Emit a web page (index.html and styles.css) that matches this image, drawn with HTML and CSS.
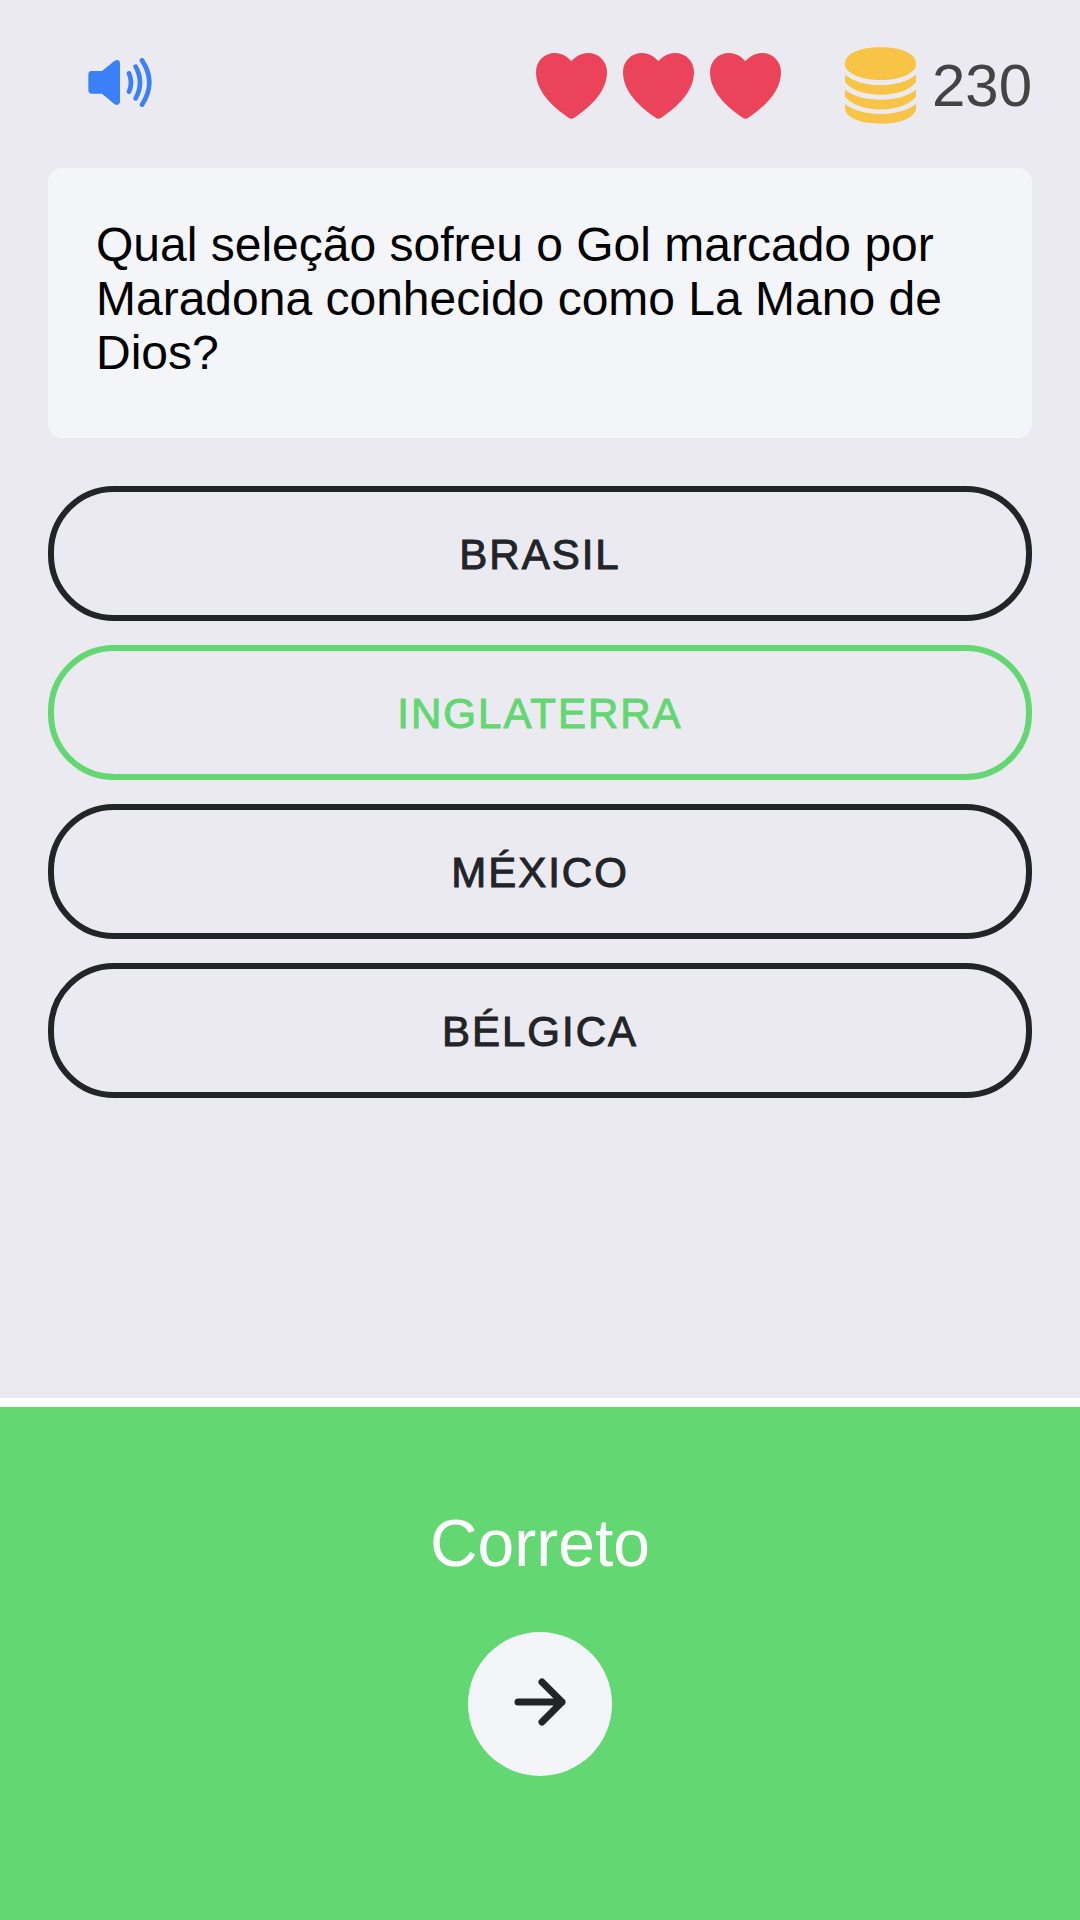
FILE: index.html
```html
<!DOCTYPE html>
<html lang="pt-BR">
<head>
  <meta charset="utf-8">
  <meta name="viewport" content="width=device-width, initial-scale=1">
  <title>Quiz</title>
  <link rel="stylesheet" href="styles.css">
</head>
<body class="quiz">
  <svg class="symbols" aria-hidden="true">
    <symbol id="heart" viewBox="0 0 213 198">
      <path d="M106 25C96 12 78 0 57 0C25 0 0 24 0 57C0 115 48 160 98 194Q106 200 115 194C165 160 213 115 213 57C213 24 188 0 156 0C135 0 117 12 106 25Z"/>
    </symbol>
  </svg>

  <header class="status">
    <button class="sound" type="button" aria-label="Som">
      <svg class="sound-icon" viewBox="0 0 192 147" aria-hidden="true">
        <path class="sound-body" d="M10 39H42L80 8Q84 6 88 6Q96 7 96 16V132Q95 140 87 141Q83 141 79 138L42 107H10Q1 106 1 97V49Q1 40 10 39Z"/>
        <path class="sound-wave" d="M123 46Q135 73 123 101M143 26Q169 73 143 121M162 7Q206 73 162 140"/>
      </svg>
    </button>
    <div class="lives" role="img" aria-label="3 vidas">
      <svg class="heart"><use href="#heart"/></svg>
      <svg class="heart"><use href="#heart"/></svg>
      <svg class="heart"><use href="#heart"/></svg>
    </div>
    <div class="coins">
      <svg class="coins-icon" viewBox="0 0 213 231" aria-hidden="true">
        <path d="M0 48C2 18 48 1 107 1S211 18 213 48V56C208 80 162 99 107 99S5 80 0 56Z"/>
        <path d="M0 83C25 103 62 114 107 114S188 103 213 83V105C193 130 155 143 107 143S20 130 0 105Z"/>
        <path d="M0 128C25 147 62 158 107 158S188 147 213 128V149C193 173 155 187 107 187S20 173 0 149Z"/>
        <path d="M0 171C25 190 62 201 107 201S188 190 213 171V186C208 214 165 230 107 230S5 214 0 186Z"/>
      </svg>
      <span class="coins-value">230</span>
    </div>
  </header>

  <main class="content">
    <h1 class="question">Qual seleção sofreu o Gol marcado por Maradona conhecido como La Mano de Dios?</h1>
    <div class="answers">
      <button class="answer" type="button">BRASIL</button>
      <button class="answer answer-correct" type="button">INGLATERRA</button>
      <button class="answer" type="button">MÉXICO</button>
      <button class="answer" type="button">BÉLGICA</button>
    </div>
  </main>

  <footer class="result">
    <p class="result-text">Correto</p>
    <button class="next" type="button" aria-label="Próxima pergunta">
      <svg class="next-icon" viewBox="0 0 54 54" aria-hidden="true">
        <path d="M5 25H49M29 5L49 25L29 45"/>
      </svg>
    </button>
  </footer>
</body>
</html>
```

FILE: styles.css
```css
:root {
  --background: #ebeaf0;
  --surface: #f4f5f9;
  --dark: #222428;
  --success: #63d772;
  --danger: #eb445a;
  --primary: #3b80f7;
  --gold: #f7c445;
}

* {
  box-sizing: border-box;
}

.quiz {
  display: flex;
  flex-direction: column;
  min-height: 100vh;
  margin: 0;
  background: var(--background);
  color: #000;
  font-family: "Helvetica Neue", "Liberation Sans", Arial, sans-serif;
}

button {
  margin: 0;
  padding: 0;
  border: 0;
  background: none;
  font: inherit;
  cursor: pointer;
}

svg {
  display: block;
}

.symbols {
  position: absolute;
  width: 0;
  height: 0;
}

.status {
  display: flex;
  align-items: center;
  height: 168px;
  padding: 3px 48px 0 88px;
}

.sound {
  margin-right: auto;
  padding-bottom: 6px;
}

.sound-icon {
  width: 64px;
  height: 49px;
}

.sound-body {
  fill: var(--primary);
}

.sound-wave {
  fill: none;
  stroke: var(--primary);
  stroke-width: 14;
  stroke-linecap: round;
}

.lives {
  display: flex;
  gap: 16px;
  margin-right: 64px;
}

.heart {
  width: 71px;
  height: 66px;
  fill: var(--danger);
}

.coins {
  display: flex;
  align-items: center;
  gap: 16px;
}

.coins-icon {
  width: 71px;
  height: 77px;
  fill: var(--gold);
}

.coins-value {
  color: #444;
  font-size: 60px;
  line-height: 72px;
}

.content {
  flex: 1;
  padding: 0 48px 48px;
}

.question {
  margin: 0 0 48px;
  padding: 50px 48px 58px;
  border-radius: 14px;
  background: var(--surface);
  font-size: 48px;
  font-weight: 400;
  line-height: 54px;
}

.answers {
  display: grid;
  gap: 24px;
}

.answer {
  height: 135px;
  padding-top: 3px;
  border: 6px solid var(--dark);
  border-radius: 66px;
  color: var(--dark);
  font-size: 42px;
  letter-spacing: 2px;
  -webkit-text-stroke: 1px currentColor;
}

.answer-correct {
  border-color: var(--success);
  color: var(--success);
}

.result {
  display: flex;
  flex-direction: column;
  align-items: center;
  padding: 96px 48px 144px;
  border-top: 9px solid #fff;
  background: var(--success);
}

.result-text {
  margin: 0 0 49px;
  color: #fff;
  font-size: 66px;
  line-height: 80px;
}

.next {
  display: grid;
  place-items: center;
  width: 144px;
  height: 144px;
  border-radius: 50%;
  background: var(--surface);
}

.next-icon {
  width: 54px;
  height: 54px;
  fill: none;
  stroke: var(--dark);
  stroke-width: 7;
  stroke-linecap: round;
  stroke-linejoin: round;
}
```
